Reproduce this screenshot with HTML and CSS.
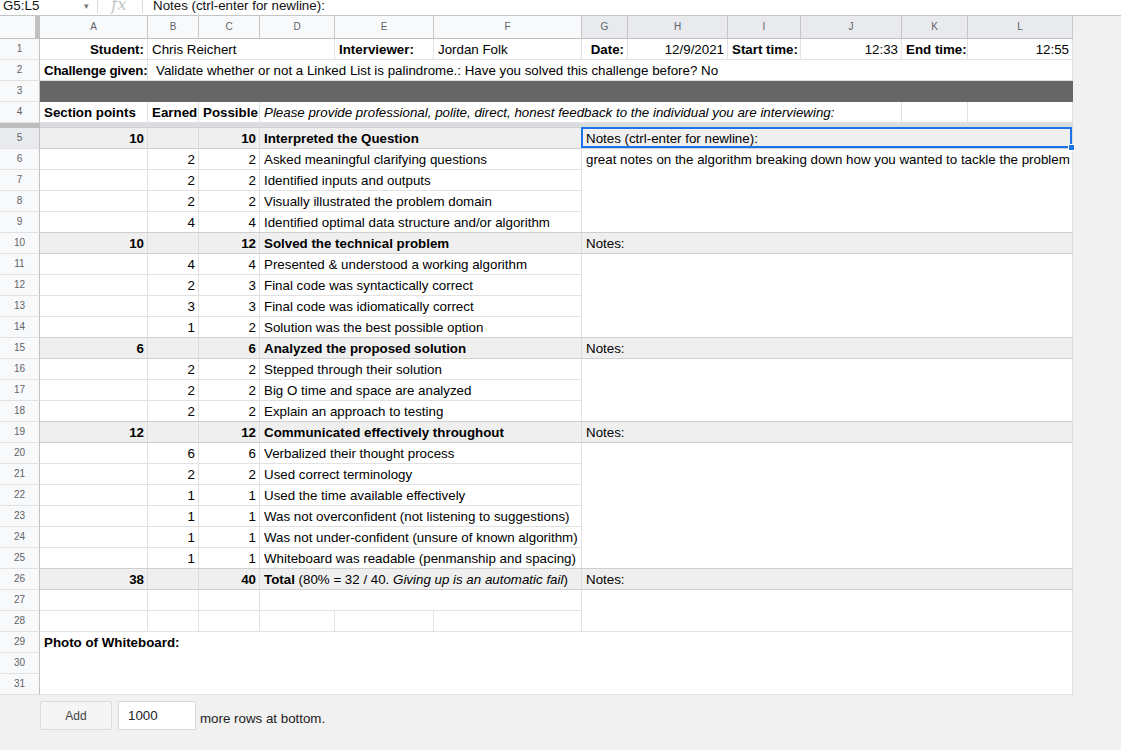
FILE: index.html
```html
<!DOCTYPE html>
<html lang="en">
<head>
<meta charset="utf-8">
<title>Interview Rubric</title>
<link rel="stylesheet" href="styles.css">
</head>
<body>
<div class="fbar">
  <div class="namebox">G5:L5</div>
  <div class="caret">&#9662;</div>
  <div class="fsep"></div>
  <div class="fx">fx</div>
  <div class="fsep"></div>
  <div class="ftext">Notes (ctrl-enter for newline):</div>
</div>

<div class="sheet">
  <!-- column headers -->
  <div class="corner"></div>
  <div class="ch">A</div><div class="ch">B</div><div class="ch">C</div><div class="ch">D</div>
  <div class="ch">E</div><div class="ch">F</div>
  <div class="ch on">G</div><div class="ch on">H</div><div class="ch on">I</div>
  <div class="ch on">J</div><div class="ch on">K</div><div class="ch on">L</div>

  <!-- row 1 -->
  <div class="rh">1</div>
  <div class="c r b">Student:</div>
  <div class="c s3">Chris Reichert</div>
  <div class="c b">Interviewer:</div>
  <div class="c">Jordan Folk</div>
  <div class="c r b">Date:</div>
  <div class="c r">12/9/2021</div>
  <div class="c r b">Start time:</div>
  <div class="c r">12:33</div>
  <div class="c r b">End time:</div>
  <div class="c r">12:55</div>

  <!-- row 2 -->
  <div class="rh">2</div>
  <div class="c b tight">Challenge given:</div>
  <div class="c s11 pad">Validate whether or not a Linked List is palindrome.: Have you solved this challenge before? No</div>

  <!-- row 3 -->
  <div class="rh">3</div>
  <div class="c s12 dark"></div>

  <!-- row 4 -->
  <div class="rh">4</div>
  <div class="c b">Section points</div>
  <div class="c b">Earned</div>
  <div class="c b">Possible</div>
  <div class="c s7 i">Please provide professional, polite, direct, honest feedback to the individual you are interviewing:</div>
  <div class="c"></div>
  <div class="c"></div>

  <!-- frozen band -->
  <div class="band-rh"></div>
  <div class="band s12"></div>

  <!-- row 5 -->
  <div class="rh on">5</div>
  <div class="c sec r b">10</div>
  <div class="c sec"></div>
  <div class="c sec r b">10</div>
  <div class="c sec s3 b">Interpreted the Question</div>
  <div class="c sec s6 sel">Notes (ctrl-enter for newline):<span class="handle"></span></div>

  <!-- row 6 -->
  <div class="rh">6</div>
  <div class="c"></div><div class="c r">2</div><div class="c r">2</div>
  <div class="c s3">Asked meaningful clarifying questions</div>
  <div class="c s6 rs4">great notes on the algorithm breaking down how you wanted to tackle the problem</div>
  <div class="rh">7</div>
  <div class="c"></div><div class="c r">2</div><div class="c r">2</div>
  <div class="c s3">Identified inputs and outputs</div>
  <div class="rh">8</div>
  <div class="c"></div><div class="c r">2</div><div class="c r">2</div>
  <div class="c s3">Visually illustrated the problem domain</div>
  <div class="rh">9</div>
  <div class="c"></div><div class="c r">4</div><div class="c r">4</div>
  <div class="c s3">Identified optimal data structure and/or algorithm</div>

  <!-- row 10 -->
  <div class="rh">10</div>
  <div class="c sec r b">10</div>
  <div class="c sec"></div>
  <div class="c sec r b">12</div>
  <div class="c sec s3 b">Solved the technical problem</div>
  <div class="c sec s6">Notes:</div>
  <div class="rh">11</div>
  <div class="c"></div><div class="c r">4</div><div class="c r">4</div>
  <div class="c s3">Presented &amp; understood a working algorithm</div>
  <div class="c s6 rs4"></div>
  <div class="rh">12</div>
  <div class="c"></div><div class="c r">2</div><div class="c r">3</div>
  <div class="c s3">Final code was syntactically correct</div>
  <div class="rh">13</div>
  <div class="c"></div><div class="c r">3</div><div class="c r">3</div>
  <div class="c s3">Final code was idiomatically correct</div>
  <div class="rh">14</div>
  <div class="c"></div><div class="c r">1</div><div class="c r">2</div>
  <div class="c s3">Solution was the best possible option</div>

  <!-- row 15 -->
  <div class="rh">15</div>
  <div class="c sec r b">6</div>
  <div class="c sec"></div>
  <div class="c sec r b">6</div>
  <div class="c sec s3 b">Analyzed the proposed solution</div>
  <div class="c sec s6">Notes:</div>
  <div class="rh">16</div>
  <div class="c"></div><div class="c r">2</div><div class="c r">2</div>
  <div class="c s3">Stepped through their solution</div>
  <div class="c s6 rs3"></div>
  <div class="rh">17</div>
  <div class="c"></div><div class="c r">2</div><div class="c r">2</div>
  <div class="c s3">Big O time and space are analyzed</div>
  <div class="rh">18</div>
  <div class="c"></div><div class="c r">2</div><div class="c r">2</div>
  <div class="c s3">Explain an approach to testing</div>

  <!-- row 19 -->
  <div class="rh">19</div>
  <div class="c sec r b">12</div>
  <div class="c sec"></div>
  <div class="c sec r b">12</div>
  <div class="c sec s3 b">Communicated effectively throughout</div>
  <div class="c sec s6">Notes:</div>
  <div class="rh">20</div>
  <div class="c"></div><div class="c r">6</div><div class="c r">6</div>
  <div class="c s3">Verbalized their thought process</div>
  <div class="c s6 rs6"></div>
  <div class="rh">21</div>
  <div class="c"></div><div class="c r">2</div><div class="c r">2</div>
  <div class="c s3">Used correct terminology</div>
  <div class="rh">22</div>
  <div class="c"></div><div class="c r">1</div><div class="c r">1</div>
  <div class="c s3">Used the time available effectively</div>
  <div class="rh">23</div>
  <div class="c"></div><div class="c r">1</div><div class="c r">1</div>
  <div class="c s3">Was not overconfident (not listening to suggestions)</div>
  <div class="rh">24</div>
  <div class="c"></div><div class="c r">1</div><div class="c r">1</div>
  <div class="c s3">Was not under-confident (unsure of known algorithm)</div>
  <div class="rh">25</div>
  <div class="c"></div><div class="c r">1</div><div class="c r">1</div>
  <div class="c s3">Whiteboard was readable (penmanship and spacing)</div>

  <!-- row 26 -->
  <div class="rh">26</div>
  <div class="c sec r b">38</div>
  <div class="c sec"></div>
  <div class="c sec r b">40</div>
  <div class="c sec s3"><b>Total</b> (80% = 32 / 40. <i>Giving up is an automatic fail</i>)</div>
  <div class="c sec s6">Notes:</div>

  <!-- rows 27-28 -->
  <div class="rh">27</div>
  <div class="c"></div><div class="c"></div><div class="c"></div>
  <div class="c s3"></div>
  <div class="c s6 rs2"></div>
  <div class="rh">28</div>
  <div class="c"></div><div class="c"></div><div class="c"></div>
  <div class="c"></div><div class="c"></div><div class="c"></div>

  <!-- rows 29-31 -->
  <div class="rh">29</div>
  <div class="c s12 rs3 b">Photo of Whiteboard:</div>
  <div class="rh">30</div>
  <div class="rh">31</div>
</div>

<div class="addbar">
  <div class="addbtn">Add</div>
  <div class="addinput">1000</div>
  <div class="addtext">more rows at bottom.</div>
</div>
</body>
</html>
```

FILE: styles.css
```css
* { box-sizing: border-box; }

html, body {
  margin: 0;
  padding: 0;
}

body {
  background: #f1f1f1;
  font-family: "Liberation Sans", Arial, sans-serif;
  font-size: 13.33px;
  color: #000;
  width: 1121px;
  height: 750px;
  overflow: hidden;
}

/* formula bar */
.fbar {
  height: 16px;
  background: #fff;
  border-bottom: 1px solid #c4c7c5;
  display: flex;
  align-items: flex-start;
  overflow: hidden;
}

.namebox {
  width: 84px;
  padding-left: 3px;
  margin-top: -3px;
  line-height: 18px;
  font-size: 13.33px;
  color: #111;
}

.caret {
  width: 13px;
  margin-top: 2px;
  font-size: 9px;
  line-height: 9px;
  color: #777;
}

.fsep {
  width: 1px;
  height: 13px;
  background: #dadce0;
}

.fx {
  width: 44px;
  padding-left: 13px;
  margin-top: -6px;
  font-family: "DejaVu Serif", "Liberation Serif", serif;
  font-style: italic;
  font-size: 17px;
  line-height: 20px;
  color: #c4c7c5;
}

.ftext {
  padding-left: 10px;
  margin-top: -3px;
  line-height: 18px;
  color: #111;
}

/* grid */
.sheet {
  display: grid;
  width: 1073px;
  grid-template-columns: 40px 108px 51px 61px 75px 99px 148px 46px 100px 73px 101px 66px 105px;
  grid-template-rows: 23px repeat(4, 21px) 5px repeat(27, 21px);
}

.corner {
  background: #f8f9fa;
  border-right: 5px solid #c0c0c0;
  border-bottom: 1px solid #c0c0c0;
}

.ch {
  background: #f8f9fa;
  border-right: 1px solid #c7c7c7;
  border-bottom: 1px solid #c0c0c0;
  color: #5f6368;
  font-size: 10px;
  line-height: 22px;
  text-align: center;
}

.ch.on {
  background: #e8eaed;
}

.rh {
  background: #f8f9fa;
  border-right: 1px solid #c0c0c0;
  border-bottom: 1px solid #e2e2e2;
  color: #5f6368;
  font-size: 10px;
  line-height: 20px;
  text-align: center;
}

.rh.on {
  background: #e8eaed;
}

.band-rh {
  background: #bdbdbd;
}

.band {
  background: #dadce0;
}

.c {
  background: #fff;
  border-right: 1px solid #e2e2e2;
  border-bottom: 1px solid #e2e2e2;
  line-height: 18px;
  padding: 2px 3px 0 4px;
  white-space: nowrap;
  overflow: hidden;
}

.r { text-align: right; }
.b { font-weight: bold; }
.i { font-style: italic; }
.pad { padding-left: 8px; }
.tight { letter-spacing: -0.2px; padding-right: 0; }

.s3 { grid-column: span 3; }
.s6 { grid-column: span 6; }
.s7 { grid-column: span 7; }
.s11 { grid-column: span 11; }
.s12 { grid-column: span 12; }

.rs2 { grid-row: span 2; }
.rs3 { grid-row: span 3; }
.rs4 { grid-row: span 4; }
.rs6 { grid-row: span 6; }

.dark {
  background: #666;
  border-color: #666;
}

.sec {
  background: #efefef;
  border-bottom-color: #d0d0d0;
  border-right-color: #dcdcdc;
  box-shadow: 0 -1px 0 #d0d0d0;
}

.sel {
  position: relative;
  overflow: visible;
}

.sel::after {
  content: "";
  position: absolute;
  top: -1px;
  left: -1px;
  right: 0;
  bottom: 0;
  border: 2px solid #1a73e8;
  pointer-events: none;
}

.handle {
  position: absolute;
  right: -3px;
  bottom: -3px;
  width: 7px;
  height: 7px;
  background: #1a73e8;
  border: 1px solid #fff;
  z-index: 2;
}

/* add rows bar */
.addbar {
  display: flex;
  align-items: flex-start;
  padding: 6px 0 0 40px;
}

.addbtn {
  width: 72px;
  height: 29px;
  background: #f5f5f5;
  border: 1px solid #dcdcdc;
  border-radius: 2px;
  color: #444;
  font-size: 12px;
  line-height: 28px;
  text-align: center;
}

.addinput {
  width: 78px;
  height: 29px;
  margin-left: 6px;
  background: #fff;
  border: 1px solid #d9d9d9;
  padding-left: 9px;
  line-height: 28px;
  color: #222;
}

.addtext {
  margin-left: 4px;
  margin-top: 9px;
  line-height: 18px;
  color: #222;
}
```
